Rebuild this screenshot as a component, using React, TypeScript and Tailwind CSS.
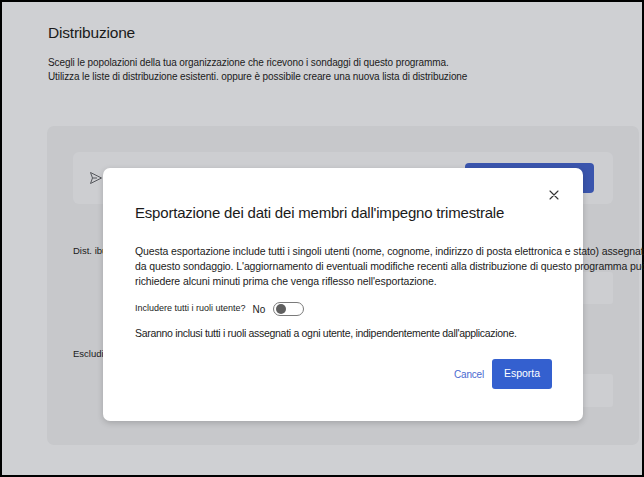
import React from "react";

const font = { fontFamily: '"Liberation Sans", Arial, sans-serif' };

function SendIcon() {
  return (
    <svg width="14" height="14" viewBox="0 0 14 14" fill="none" stroke="#55575c" strokeWidth="1" strokeLinejoin="round">
      <path d="M1.5 1.5 L12.5 7 L1.5 12.5 L3.5 7 Z" />
      <path d="M3.5 7 H8" />
    </svg>
  );
}

function CloseIcon() {
  return (
    <svg width="10" height="10" viewBox="0 0 10 10" stroke="#333" strokeWidth="1.1" strokeLinecap="round">
      <path d="M1 1 L9 9 M9 1 L1 9" />
    </svg>
  );
}

export default function App() {
  return (
    <div
      className="relative w-[644px] h-[477px] border-2 border-black bg-[#cfd0d3] text-[#1b1b1b]"
      style={font}
    >
      {/* page behind the dialog */}
      <div className="pl-[46px] pt-[21px]">
        <h1 className="text-[15.5px] leading-[20px] tracking-[-0.2px] text-[#1a1a1a]">Distribuzione</h1>
        <p className="mt-[13px] text-[10px] leading-[14px] tracking-[-0.1px] whitespace-nowrap">
          Scegli le popolazioni della tua organizzazione che ricevono i sondaggi di questo programma.
          <br />
          Utilizza le liste di distribuzione esistenti. oppure è possibile creare una nuova lista di distribuzione
        </p>
      </div>

      <div className="ml-[45px] mt-[42px] w-[592px] h-[319px] rounded-[7px] bg-[#c7c8cb] pl-[26px] pt-[26px]">
        <div className="w-[540px] flex flex-col">
          <div className="h-[52px] rounded-[6px] bg-[#cdced1] flex items-center pl-[16px]">
            <SendIcon />
            <div className="ml-auto mr-[19px] w-[129px] h-[30px] rounded-[4px] bg-[#3a55ad]" />
          </div>
          <span className="mt-[40px] text-[9.5px] leading-[14px]">Dist. ibuzione</span>
          <div className="self-end mt-[14px] w-[200px] h-[32px] rounded-[3px] bg-[#cdced1]" />
          <span className="mt-[43px] text-[9.5px] leading-[14px]">Escludi</span>
          <div className="self-end mt-[13px] w-[200px] h-[33px] rounded-[3px] bg-[#cdced1]" />
        </div>
      </div>

      {/* dialog: the white panel is 480px, its text runs a little past the right edge */}
      <div className="absolute z-10 left-[101px] top-[166px] w-[539px] h-[253px] pl-[32px] pt-[35px]">
        <div className="absolute left-0 top-0 w-[480px] h-[253px] rounded-[7px] bg-white shadow-[0_2px_6px_rgba(0,0,0,0.18)]" />
        <button className="absolute left-[446px] top-[22px] w-[10px] h-[10px] flex items-center justify-center">
          <CloseIcon />
        </button>
        <div className="relative">
          <h2 className="text-[15px] leading-[20px] tracking-[-0.2px] text-[#1a1a1a] whitespace-nowrap">
            Esportazione dei dati dei membri dall'impegno trimestrale
          </h2>
          <p className="mt-[21px] text-[10.5px] leading-[15px] tracking-[-0.1px] whitespace-nowrap">
            Questa esportazione include tutti i singoli utenti (nome, cognome, indirizzo di posta elettronica e stato) assegnati
            <br />
            da questo sondaggio. L'aggiornamento di eventuali modifiche recenti alla distribuzione di questo programma può
            <br />
            richiedere alcuni minuti prima che venga riflesso nell'esportazione.
          </p>
          <div className="mt-[12px] flex items-center h-[16px]">
            <span className="text-[9px]">Includere tutti i ruoli utente?</span>
            <span className="ml-[7px] text-[10px]">No</span>
            <div className="ml-[8px] w-[31px] h-[14px] rounded-full border border-[#7a7a7a] bg-white flex items-center pl-[2px]">
              <div className="w-[10px] h-[10px] rounded-full bg-[#5f5f5f]" />
            </div>
          </div>
          <p className="mt-[8px] text-[10.5px] leading-[16px] tracking-[-0.3px] whitespace-nowrap">
            Saranno inclusi tutti i ruoli assegnati a ogni utente, indipendentemente dall'applicazione.
          </p>
          <div className="mt-[18px] mr-[90px] flex items-center justify-end">
            <button className="text-[10px] text-[#4a6ad0] tracking-[-0.2px]">Cancel</button>
            <button className="ml-[8px] w-[60px] h-[30px] rounded-[3px] bg-[#3460cf] text-white text-[10.5px]">
              Esporta
            </button>
          </div>
        </div>
      </div>
    </div>
  );
}
